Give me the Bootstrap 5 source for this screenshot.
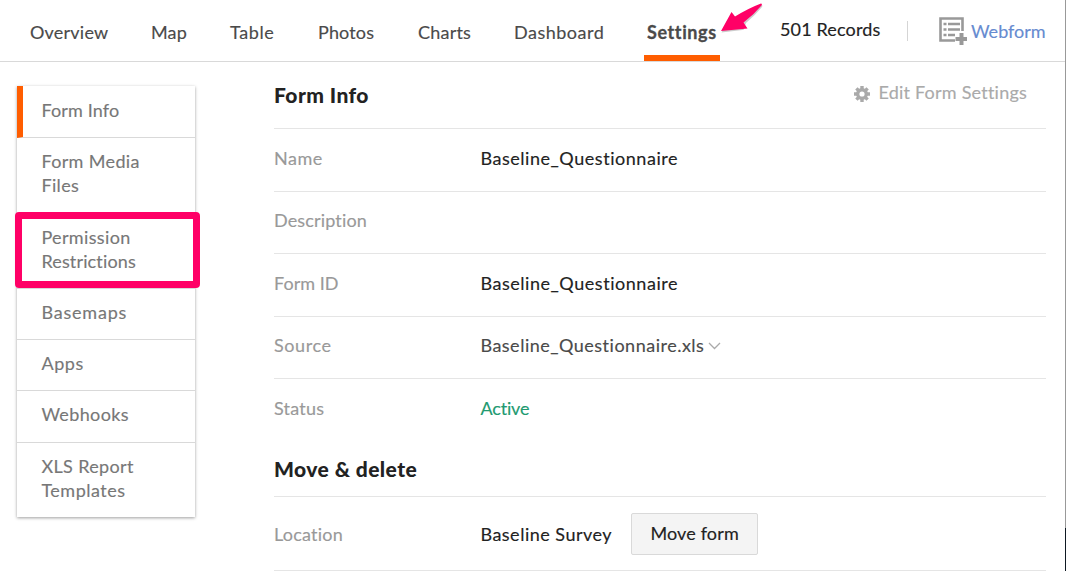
<!DOCTYPE html>
<html lang="en">
<head>
<meta charset="utf-8">
<meta name="viewport" content="width=device-width, initial-scale=1">
<title>Form settings</title>
<link href="https://cdn.jsdelivr.net/npm/bootstrap@5.3.0/dist/css/bootstrap.min.css" rel="stylesheet">
<style>
  body { font-family: Lato, "Liberation Sans", sans-serif; font-size: 18px; line-height: 24px; color: #222; background: #fff; height: 571px; overflow: hidden; font-variant-ligatures: none; -webkit-text-stroke: .15px; }
  .page { height: 571px; width: 1066px; }
  .main-area { width: 1065px; }
  .edge { width: 1px; background: linear-gradient(#999 0 528px, #0e1822 528px); }
  .topbar { height: 62px; border-bottom: 1px solid #d9d9d9; }
  .tabs { display: grid; grid-template-columns: 121px 79px 88px 100px 96px 133px 76px; margin-left: 30px; }
  .tabs a { color: #4a4a4a; text-decoration: none; height: 61px; padding-top: 20px; white-space: nowrap; }
  .tabs a.active { font-weight: 700; border-bottom: 6px solid #ff5d00; margin-left: -3px; margin-right: 3px; padding-left: 3px; -webkit-text-stroke: .3px; }
  .arrow { left: 74px; top: 0; }
  .records { margin-left: 57px; padding-top: 17px; width: 127px; white-space: nowrap; }
  .divider { width: 1px; height: 20px; margin-top: 21px; background: #d5d5d5; }
  .webform { color: #668bd0; text-decoration: none; margin-left: 31px; padding-top: 19px; white-space: nowrap; }
  .webform svg { margin-top: -2px; }
  .ls-0 { letter-spacing: .04px; }
  .ls-1 { letter-spacing: .15px; }
  .ls-2 { letter-spacing: .22px; }
  .ls-3 { letter-spacing: .36px; }
  .ls-4 { letter-spacing: .5px; }
  .ls-5 { letter-spacing: .6px; }
  .ls-6 { letter-spacing: .8px; }
  .side { margin: 24px 0 0 17px; width: 178px; height: 431px; box-shadow: 0 1px 3px rgba(0,0,0,.38); border-radius: 0; }
  .side .list-group-item { border: 0; border-bottom: 1px solid #d9d9d9; padding: 11px 20px 15.3px 24.4px; color: #777; background: #fff; border-radius: 0; }
  .side .list-group-item:last-child { border-bottom: 0; }
  .side .list-group-item.active { border-left: 6px solid #ff5d00; padding-left: 18.4px; padding-top: 12px; margin: 0; }
  .marker { position: absolute; left: -2px; right: -5px; top: -2px; bottom: 0; border: 7px solid #ff0066; border-radius: 4px; }
  .details { margin-left: 79px; width: 772px; }
  .section-head { border-bottom: 1px solid #e5e5e5; }
  .section-head h2 { font-size: 21px; line-height: 24px; font-weight: 900; margin: 0; letter-spacing: .42px; -webkit-text-stroke: 0; }
  .edit { color: #aaa; text-decoration: none; padding-right: 19px; margin-top: -3px; }
  .edit svg { margin: 6px 8px 0 0; }
  .field { height: 62.5px; border-bottom: 1px solid #e5e5e5; padding-bottom: 4px; }
  .field dt { width: 206.4px; font-weight: 400; color: #999; }
  .field dd { margin: 0; }
  .title-value { letter-spacing: .54px; }
  .field-location { height: 74px; padding: 0; }
  .field-location dt { padding-top: 2px; }
  .field-location dd { padding-top: 1px; }
  .move { width: 127px; height: 42px; border: 1px solid #d9d9d9; border-radius: 2px; background: #f4f4f4; color: #222; font-size: 18px; line-height: 24px; padding: 0 0 2px; margin: 0 0 0 19px; -webkit-text-stroke: .15px; }
</style>
</head>
<body>
<div class="page d-flex">
  <div class="main-area">
    <header class="topbar d-flex">
      <nav class="tabs">
        <a href="#" class="ls-2">Overview</a>
        <a href="#" class="ls-1">Map</a>
        <a href="#" class="ls-5">Table</a>
        <a href="#" class="ls-1">Photos</a>
        <a href="#" class="ls-2">Charts</a>
        <a href="#" class="ls-4">Dashboard</a>
        <a href="#" class="active position-relative ls-5">Settings
          <svg class="position-absolute arrow" width="48" height="36" viewBox="0 0 48 36"><path d="M3 31 13.500 12 17.500 16.500Q31 8 43 3.500Q44.500 3.500 43.700 5.200Q36 14.500 27.500 21.500L25 28.500 24 28.500Z" fill="#000" opacity=".2" transform="translate(.5 1.500)"/><path d="M3 31 13.500 12 17 16.500Q31 8 43 3.500Q44.500 3.500 43.700 5.200Q36 14.500 25.500 22.500L29.500 28.500Z" fill="#ff0066"/></svg></a>
      </nav>
      <div class="records ls-1">501 Records</div>
      <div class="divider"></div>
      <a href="#" class="webform d-flex"><svg width="28" height="28" viewBox="0 0 28 28"><path d="M16 23.500H1.500V1.500H23.500V14" fill="none" stroke="#999" stroke-width="2.600"/><path d="M4.500 7h3M4.500 12.500h3M4.500 18h3M9 7h12M9 12.500h12M9 18h7" stroke="#999" stroke-width="2.600" fill="none"/><path d="M22.500 16v12M16.500 22h12" stroke="#999" stroke-width="4"/></svg><span class="ms-1">Webform</span></a>
    </header>
    <main class="d-flex">
      <div class="side list-group">
        <a href="#" class="list-group-item active ls-1">Form Info</a>
        <a href="#" class="list-group-item ls-3">Form Media<br>Files</a>
        <a href="#" class="list-group-item"><span class="ls-3">Permission</span><br><span class="ls-1">Restrictions</span><span class="marker"></span></a>
        <a href="#" class="list-group-item ls-6">Basemaps</a>
        <a href="#" class="list-group-item ls-5">Apps</a>
        <a href="#" class="list-group-item ls-3">Webhooks</a>
        <a href="#" class="list-group-item"><span class="ls-3">XLS Report</span><br><span class="ls-4">Templates</span></a>
      </div>
      <section class="details">
        <div class="section-head d-flex justify-content-between" style="height:67px;padding-top:21px">
          <h2>Form Info</h2>
          <a href="#" class="edit d-flex ls-2"><svg width="16" height="16" viewBox="-8 -8 16 16"><g stroke="#aaa" stroke-width="3.400"><path d="M0-8V8M-8 0H8M-5.600-5.600 5.600 5.600M5.600-5.600-5.600 5.600"/></g><circle r="6" fill="#aaa"/><circle r="2.600" fill="#fff"/></svg><span>Edit Form Settings</span></a>
        </div>
        <dl class="m-0">
          <div class="field d-flex align-items-center"><dt class="ls-4">Name</dt><dd class="title-value">Baseline_Questionnaire</dd></div>
          <div class="field d-flex align-items-center"><dt class="ls-1">Description</dt><dd></dd></div>
          <div class="field d-flex align-items-center"><dt class="ls-0">Form ID</dt><dd class="title-value">Baseline_Questionnaire</dd></div>
          <div class="field d-flex align-items-center"><dt class="ls-5">Source</dt><dd class="ls-4" style="color:#4a4a4a">Baseline_Questionnaire.xls<svg class="ms-1" width="13" height="12" viewBox="0 0 13 12"><path d="M1 1 6.500 6.500 12 1" fill="none" stroke="#aaa" stroke-width="1.300"/></svg></dd></div>
          <div class="field border-0 d-flex align-items-center"><dt class="ls-2">Status</dt><dd style="color:#229a70;letter-spacing:-.15px">Active</dd></div>
        </dl>
        <div class="section-head" style="height:55px;padding-top:15px"><h2>Move &amp; delete</h2></div>
        <dl class="m-0"><div class="field field-location d-flex align-items-center"><dt class="ls-2">Location</dt><dd class="ls-4">Baseline Survey</dd><dd><button class="btn move ls-1">Move form</button></dd></div></dl>
      </section>
    </main>
  </div>
  <div class="edge"></div>
</div>
<script src="https://cdn.jsdelivr.net/npm/bootstrap@5.3.0/dist/js/bootstrap.bundle.min.js"></script>
</body>
</html>
